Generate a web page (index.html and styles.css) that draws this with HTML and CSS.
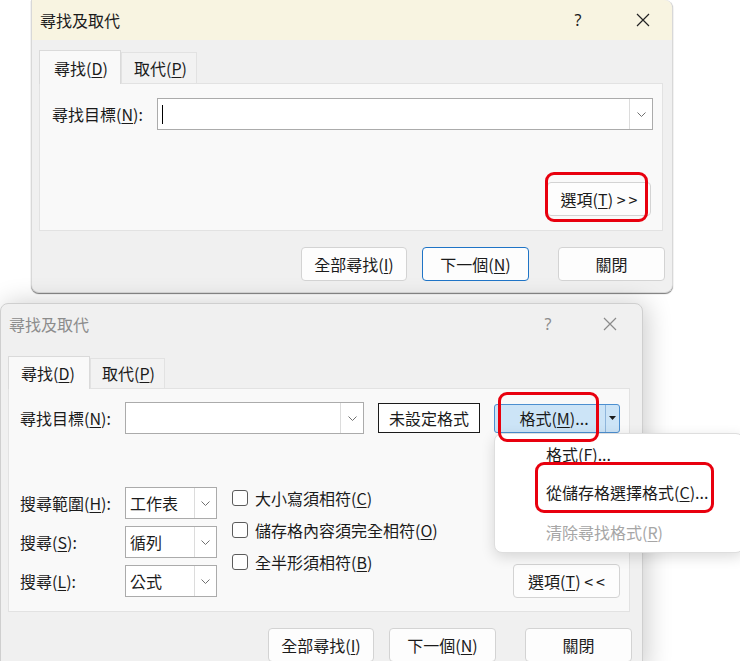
FILE: index.html
```html
<!DOCTYPE html>
<html>
<head>
    <meta charset="utf-8">
    <title>尋找及取代</title>
    <link rel="stylesheet" href="styles.css">
</head>
<body>
<div class="page">

<div class="dialog dialog-top">
    <div class="titlebar">
        <span class="title">尋找及取代</span>
        <div class="caption-btns">
            <span class="cap-btn">?</span>
            <span class="cap-btn"><svg width="14" height="14" viewBox="0 0 14 14"><path d="M1 1L13 13M13 1L1 13" stroke="#222" stroke-width="1.2" fill="none"/></svg></span>
        </div>
    </div>
    <div class="dialog-body">
        <div class="tabs">
            <div class="tab active">尋找(<u>D</u>)</div>
            <div class="tab">取代(<u>P</u>)</div>
        </div>
        <div class="panel">
            <div class="row">
                <span class="field-label">尋找目標(<u>N</u>):</span>
                <div class="combo combo-wide">
                    <span class="caret"></span>
                    <span class="combo-arrow"><svg width="9" height="5" viewBox="0 0 9 5"><path d="M0.5 0.5L4.5 4.5L8.5 0.5" fill="none" stroke="#707070"/></svg></span>
                </div>
            </div>
            <div class="panel-foot">
                <button class="btn btn-options">選項(<u>T</u>) <span class="chev">&gt;&gt;</span></button>
            </div>
        </div>
        <div class="footer">
            <button class="btn btn-findall">全部尋找(<u>I</u>)</button>
            <button class="btn btn-default btn-next">下一個(<u>N</u>)</button>
            <button class="btn">關閉</button>
        </div>
    </div>
</div>

<div class="dialog dialog-bottom">
    <div class="titlebar">
        <span class="title">尋找及取代</span>
        <div class="caption-btns">
            <span class="cap-btn">?</span>
            <span class="cap-btn"><svg width="14" height="14" viewBox="0 0 14 14"><path d="M1 1L13 13M13 1L1 13" stroke="#8a8a8a" stroke-width="1.2" fill="none"/></svg></span>
        </div>
    </div>
    <div class="dialog-body">
        <div class="tabs">
            <div class="tab active">尋找(<u>D</u>)</div>
            <div class="tab">取代(<u>P</u>)</div>
        </div>
        <div class="panel">
            <div class="row">
                <span class="field-label">尋找目標(<u>N</u>):</span>
                <div class="combo combo-mid">
                    <span class="combo-arrow"><svg width="9" height="5" viewBox="0 0 9 5"><path d="M0.5 0.5L4.5 4.5L8.5 0.5" fill="none" stroke="#707070"/></svg></span>
                </div>
                <div class="fmt-none">未設定格式</div>
                <div class="split">
                    <span class="split-main">格式(<u>M</u>)...</span>
                    <span class="split-arrow"><svg width="7" height="4" viewBox="0 0 7 4"><path d="M0 0H7L3.5 4Z" fill="#1b1b1b"/></svg></span>
                </div>
            </div>
            <div class="lower">
                <div class="opts-grid">
                    <span class="field-label">搜尋範圍(<u>H</u>):</span>
                    <div class="combo combo-sel">
                        <span class="combo-value">工作表</span>
                        <span class="combo-arrow"><svg width="9" height="5" viewBox="0 0 9 5"><path d="M0.5 0.5L4.5 4.5L8.5 0.5" fill="none" stroke="#707070"/></svg></span>
                    </div>
                    <span class="field-label">搜尋(<u>S</u>):</span>
                    <div class="combo combo-sel">
                        <span class="combo-value">循列</span>
                        <span class="combo-arrow"><svg width="9" height="5" viewBox="0 0 9 5"><path d="M0.5 0.5L4.5 4.5L8.5 0.5" fill="none" stroke="#707070"/></svg></span>
                    </div>
                    <span class="field-label">搜尋(<u>L</u>):</span>
                    <div class="combo combo-sel">
                        <span class="combo-value">公式</span>
                        <span class="combo-arrow"><svg width="9" height="5" viewBox="0 0 9 5"><path d="M0.5 0.5L4.5 4.5L8.5 0.5" fill="none" stroke="#707070"/></svg></span>
                    </div>
                </div>
                <div class="checks">
                    <div class="check"><span class="box"></span><span>大小寫須相符(<u>C</u>)</span></div>
                    <div class="check"><span class="box"></span><span>儲存格內容須完全相符(<u>O</u>)</span></div>
                    <div class="check"><span class="box"></span><span>全半形須相符(<u>B</u>)</span></div>
                </div>
                <button class="btn btn-options-less">選項(<u>T</u>) <span class="chev">&lt;&lt;</span></button>
            </div>
        </div>
        <div class="footer">
            <button class="btn btn-findall">全部尋找(<u>I</u>)</button>
            <button class="btn btn-next">下一個(<u>N</u>)</button>
            <button class="btn">關閉</button>
        </div>
    </div>
</div>

<div class="menu">
    <div class="menu-item">格式(<u>F</u>)...</div>
    <div class="menu-item">從儲存格選擇格式(<u>C</u>)...</div>
    <div class="menu-item disabled">清除尋找格式(<u>R</u>)</div>
</div>

<div class="mark mark-options"></div>
<div class="mark mark-format"></div>
<div class="mark mark-pick"></div>

</div>
</body>
</html>
```

FILE: styles.css
```css
* {
    box-sizing: border-box;
}
body {
    margin: 0;
    background: #fff;
    font-family: "Noto Sans CJK TC", "Noto Sans", sans-serif;
    font-size: 16px;
    color: #1b1b1b;
    overflow: hidden;
}
u {
    text-underline-offset: 2px;
}
.page {
    position: relative;
    width: 740px;
    height: 661px;
    overflow: hidden;
}

/* dialogs */
.dialog {
    background: #f0f0f0;
    border: 1px solid #d8d8d8;
}
.dialog-top {
    margin-left: 31px;
    width: 642px;
    height: 293px;
    border-top: none;
    border-radius: 0 8px 8px 8px;
    box-shadow: 0 1px 1px #7a7a7a;
}
.dialog-bottom {
    margin-top: 10px;
    width: 643px;
    height: 370px;
    border-color: #cfcfcf;
    border-radius: 8px 8px 0 0;
    box-shadow: 4px 0 26px rgba(0, 0, 0, 0.2);
}
.titlebar {
    height: 40px;
    display: flex;
    align-items: center;
    padding-left: 8px;
}
.dialog-top .titlebar {
    background: #f8f4e1;
    border-radius: 0 8px 0 0;
}
.dialog-bottom .titlebar {
    color: #8c8c8c;
}
.caption-btns {
    margin-left: auto;
    display: flex;
    gap: 25px;
    padding-right: 9px;
}
.dialog-bottom .caption-btns {
    gap: 22px;
    padding-right: 12px;
}
.cap-btn {
    width: 40px;
    height: 24px;
    display: flex;
    align-items: center;
    justify-content: center;
    font-family: "Noto Sans", sans-serif;
    font-size: 16px;
}
.dialog-body {
    padding: 10px 0 0 7px;
}
.dialog-bottom .dialog-body {
    padding-top: 12px;
}

/* tabs */
.tabs {
    display: flex;
    align-items: flex-end;
    height: 33px;
}
.dialog-bottom .tabs {
    height: 32px;
}
.tab {
    width: 76px;
    height: 31px;
    padding-left: 12px;
    line-height: 30px;
    border: 1px solid #e2e2e2;
    border-bottom: none;
    background: #f2f2f2;
}
.tab.active {
    width: 82px;
    height: 34px;
    padding-left: 14px;
    line-height: 34px;
    margin-bottom: -1px;
    background: #f9f9f9;
    border-color: #dadada;
    position: relative;
    z-index: 1;
}
.dialog-bottom .tab {
    width: 75px;
    height: 30px;
    padding-left: 11px;
    line-height: 29px;
}
.dialog-bottom .tab.active {
    width: 82px;
    height: 33px;
    padding-left: 12px;
    line-height: 32px;
}

/* panel */
.panel {
    background: #f9f9f9;
    border: 1px solid #e2e2e2;
    display: flex;
    flex-direction: column;
}
.dialog-top .panel {
    width: 624px;
    height: 148px;
    padding: 14px 9px 14px 12px;
}
.dialog-bottom .panel {
    width: 622px;
    height: 224px;
    padding: 13px 9px 14px 11px;
}
.row {
    display: flex;
    align-items: center;
}
.field-label {
    width: 105px;
    white-space: nowrap;
}

/* combos */
.combo {
    height: 32px;
    background: #fff;
    border: 1px solid #ababab;
    display: flex;
    align-items: center;
    position: relative;
}
.combo-wide {
    width: 496px;
}
.combo-mid {
    width: 239px;
}
.combo-sel {
    width: 92px;
}
.caret {
    width: 1px;
    height: 19px;
    margin-left: 4px;
    background: #000;
}
.combo-value {
    padding-left: 4px;
}
.combo-arrow {
    margin-left: auto;
    width: 23px;
    height: 100%;
    border-left: 1px solid #dcdcdc;
    display: flex;
    align-items: center;
    justify-content: center;
}
.combo-sel .combo-arrow {
    width: 22px;
}

.fmt-none {
    margin-left: 14px;
    width: 102px;
    height: 30px;
    border: 1px solid #1b1b1b;
    background: #fff;
    text-align: center;
    line-height: 28px;
}
.split {
    margin-left: 14px;
    width: 126px;
    height: 29px;
    display: flex;
    background: #cce4f7;
    border: 1px solid #4c8fd0;
    border-radius: 3px;
}
.split-main {
    width: 110px;
    text-align: center;
    line-height: 27px;
    padding-left: 8px;
}
.split-arrow {
    flex: 1;
    border-left: 1px solid #8fb6dc;
    display: flex;
    align-items: center;
    justify-content: center;
}

/* options area */
.lower {
    display: flex;
    align-items: flex-start;
    margin-top: 53px;
}
.opts-grid {
    display: grid;
    grid-template-columns: 105px 92px;
    row-gap: 7px;
    align-items: center;
}
.checks {
    margin-left: 15px;
    margin-top: -5px;
}
.check {
    height: 32px;
    display: flex;
    align-items: center;
    gap: 7px;
    white-space: nowrap;
}
.box {
    width: 16px;
    height: 16px;
    border: 1px solid #5c5c5c;
    border-radius: 3px;
    background: #fff;
}

/* buttons */
.btn {
    width: 107px;
    height: 34px;
    padding: 0;
    border: 1px solid #d3d3d3;
    border-radius: 4px;
    background: #fdfdfd;
    font-family: inherit;
    font-size: 16px;
    color: #1b1b1b;
}
.btn-default {
    border-color: #1f74c6;
}
.chev {
    letter-spacing: 3px;
    margin-right: -3px;
}
.panel-foot {
    margin-top: auto;
    display: flex;
    justify-content: flex-end;
}
.btn-options {
    width: 104px;
    margin-right: 2px;
}
.btn-options-less {
    margin-left: auto;
    align-self: flex-end;
    margin-bottom: -1px;
}
.footer {
    display: flex;
    justify-content: flex-end;
    margin-top: 16px;
    padding-right: 7px;
}
.dialog-bottom .footer {
    padding-right: 10px;
}
.btn-findall {
    width: 106px;
    margin-right: 15px;
}
.btn-next {
    margin-right: 29px;
}

/* dropdown menu */
.menu {
    position: absolute;
    left: 494px;
    top: 433px;
    width: 250px;
    height: 120px;
    padding-top: 1px;
    background: #fff;
    border: 1px solid #dedede;
    border-radius: 8px;
    box-shadow: 0 4px 14px rgba(0, 0, 0, 0.14);
}
.menu-item {
    height: 38px;
    line-height: 38px;
    padding-left: 51px;
    white-space: nowrap;
}
.menu-item.disabled {
    margin-top: 2px;
    color: #a6a6a6;
}

/* red highlight marks */
.mark {
    position: absolute;
    border: 3px solid #e8000e;
    border-radius: 9px;
}
.mark-options {
    left: 545px;
    top: 172px;
    width: 103px;
    height: 50px;
}
.mark-format {
    left: 498px;
    top: 392px;
    width: 101px;
    height: 50px;
}
.mark-pick {
    left: 535px;
    top: 462px;
    width: 179px;
    height: 51px;
}
```
